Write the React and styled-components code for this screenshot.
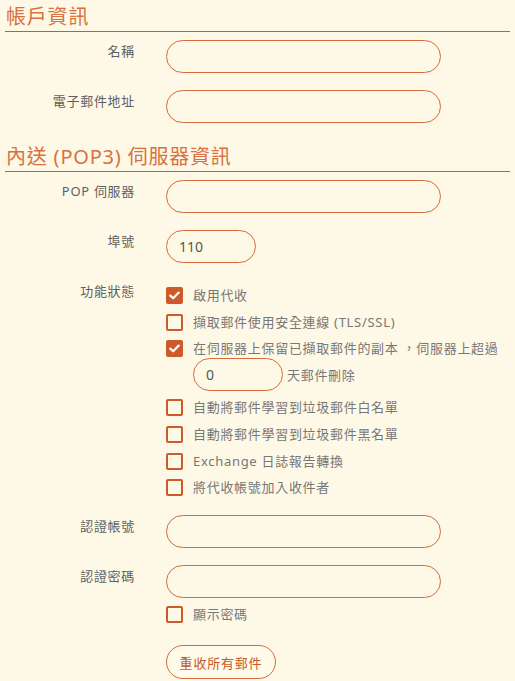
import React from "react";
import styled, { createGlobalStyle } from "styled-components";

const ACCENT = "#cd5a2a";
const BG = "#fef9e6";

const Global = createGlobalStyle`
  html, body { margin: 0; padding: 0; background: ${BG}; }
  body {
    font-family: "Noto Sans", "Noto Sans CJK TC", sans-serif;
    color: #666;
  }
`;

const Page = styled.div`
  padding: 0 0 0 5px;
  width: 510px;
  box-sizing: border-box;
`;

const SectionTitle = styled.h2`
  margin: ${(p) => (p.$first ? "0" : "17px")} 0 8px 0;
  padding: 4px 0 0 1px;
  height: 32px;
  box-sizing: border-box;
  font-size: 20px;
  line-height: 26px;
  font-weight: 400;
  color: #d8703f;
  border-bottom: 1px solid ${ACCENT};
  letter-spacing: 0.8px;
`;

const Rows = styled.div`
  display: flex;
  flex-direction: column;
  gap: 17px;
`;

const Row = styled.div`
  display: grid;
  grid-template-columns: 130px 1fr;
  column-gap: 31px;
  align-items: start;
`;

const Label = styled.div`
  text-align: right;
  font-size: 13px;
  line-height: 18px;
  padding-top: ${(p) => p.$pt || 1}px;
  font-weight: 400;
  color: #606060;
  letter-spacing: 0.7px;
`;

const Field = styled.div`
  display: flex;
  flex-direction: column;
`;

const Input = styled.input`
  box-sizing: border-box;
  width: ${(p) => p.$w || 275}px;
  height: 33px;
  border: 1px solid #d66a3c;
  border-radius: 16.5px;
  background: ${BG};
  padding: 0 12px;
  font-family: "Noto Sans", "Noto Sans CJK TC", sans-serif;
  font-size: 14px;
  color: #555;
  outline: none;
`;

const CheckList = styled.div`
  display: flex;
  flex-direction: column;
  padding-top: 6px;
`;

const CheckItem = styled.label`
  display: flex;
  align-items: flex-start;
  gap: 10px;
  min-height: ${(p) => (p.$last ? 20 : 26.7)}px;
  margin-top: ${(p) => p.$mt || 0}px;
  font-size: 13px;
  line-height: 18px;
  color: #777;
  letter-spacing: 0.7px;
`;

const Box = styled.span`
  flex: none;
  box-sizing: border-box;
  width: 17px;
  height: 17px;
  margin-top: 1px;
  border: 2px solid ${ACCENT};
  border-radius: 2px;
  background: ${(p) => (p.$checked ? ACCENT : "transparent")};
  display: flex;
  align-items: center;
  justify-content: center;
`;

const ItemBody = styled.div`
  display: flex;
  flex-direction: column;
`;

const DaysLine = styled.div`
  display: flex;
  align-items: center;
  gap: 4px;
  margin-top: 1px;
  margin-bottom: 7px;
`;

const Button = styled.button`
  box-sizing: border-box;
  width: 110px;
  height: 34px;
  border: 1px solid #d66a3c;
  border-radius: 17px;
  background: #fffbea;
  color: #c9572a;
  font-family: "Noto Sans", "Noto Sans CJK TC", sans-serif;
  font-size: 13px;
  font-weight: 400;
  letter-spacing: 0.8px;
  padding: 0;
  margin-top: 20px;
`;

const Check = ({ checked }) => (
  <Box $checked={checked}>
    {checked && (
      <svg width="11" height="9" viewBox="0 0 11 9">
        <path d="M1.3 4.6 L4.2 7.3 L9.7 1.6" fill="none" stroke="#fff" strokeWidth="2.2" strokeLinecap="round" strokeLinejoin="round" />
      </svg>
    )}
  </Box>
);

const options = [
  "自動將郵件學習到垃圾郵件白名單",
  "自動將郵件學習到垃圾郵件黑名單",
  "Exchange 日誌報告轉換",
  "將代收帳號加入收件者",
];

export default function App() {
  return (
    <Page>
      <Global />
      <SectionTitle $first>帳戶資訊</SectionTitle>
      <Rows>
        <Row>
          <Label $pt={2}>名稱</Label>
          <Input />
        </Row>
        <Row>
          <Label $pt={2}>電子郵件地址</Label>
          <Input />
        </Row>
      </Rows>

      <SectionTitle>內送 (POP3) 伺服器資訊</SectionTitle>
      <Rows>
        <Row>
          <Label $pt={2}>POP 伺服器</Label>
          <Input />
        </Row>
        <Row>
          <Label $pt={2}>埠號</Label>
          <Input $w={90} defaultValue="110" />
        </Row>
        <Row>
          <Label $pt={2}>功能狀態</Label>
          <CheckList>
            <CheckItem>
              <Check checked />
              <span>啟用代收</span>
            </CheckItem>
            <CheckItem>
              <Check />
              <span>擷取郵件使用安全連線 (TLS/SSL)</span>
            </CheckItem>
            <CheckItem>
              <Check checked />
              <ItemBody>
                <span>在伺服器上保留已擷取郵件的副本 ，伺服器上超過</span>
                <DaysLine>
                  <Input $w={90} defaultValue="0" />
                  <span>天郵件刪除</span>
                </DaysLine>
              </ItemBody>
            </CheckItem>
            {options.map((t, i) => (
              <CheckItem key={t} $last={i === options.length - 1}>
                <Check />
                <span>{t}</span>
              </CheckItem>
            ))}
          </CheckList>
        </Row>
        <Row>
          <Label $pt={2}>認證帳號</Label>
          <Input />
        </Row>
        <Row>
          <Label $pt={2}>認證密碼</Label>
          <Field>
            <Input type="password" />
            <CheckItem $mt={7} $last>
              <Check />
              <span>顯示密碼</span>
            </CheckItem>
            <div>
              <Button>重收所有郵件</Button>
            </div>
          </Field>
        </Row>
      </Rows>
    </Page>
  );
}
